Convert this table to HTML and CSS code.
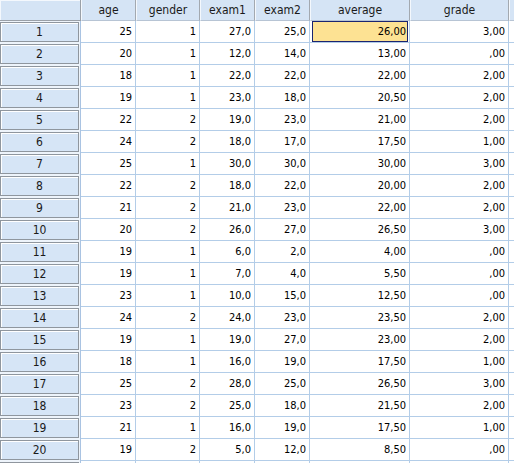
FILE: index.html
```html
<!DOCTYPE html>
<html>
<head>
<meta charset="utf-8">
<link rel="stylesheet" href="styles.css">
</head>
<body>
<div class="sheet">
  <div class="row head">
    <div class="rh corner"></div>
    <div class="ch">age</div>
    <div class="ch">gender</div>
    <div class="ch">exam1</div>
    <div class="ch">exam2</div>
    <div class="ch">average</div>
    <div class="ch">grade</div>
    <div class="ch rest"></div>
  </div>
  <div class="row"><div class="rh"><span class="btn">1</span></div><div class="c">25</div><div class="c">1</div><div class="c">27,0</div><div class="c">25,0</div><div class="c sel"><span class="selbox">26,00</span></div><div class="c">3,00</div><div class="c rest"></div></div>
  <div class="row"><div class="rh"><span class="btn">2</span></div><div class="c">20</div><div class="c">1</div><div class="c">12,0</div><div class="c">14,0</div><div class="c">13,00</div><div class="c">,00</div><div class="c rest"></div></div>
  <div class="row"><div class="rh"><span class="btn">3</span></div><div class="c">18</div><div class="c">1</div><div class="c">22,0</div><div class="c">22,0</div><div class="c">22,00</div><div class="c">2,00</div><div class="c rest"></div></div>
  <div class="row"><div class="rh"><span class="btn">4</span></div><div class="c">19</div><div class="c">1</div><div class="c">23,0</div><div class="c">18,0</div><div class="c">20,50</div><div class="c">2,00</div><div class="c rest"></div></div>
  <div class="row"><div class="rh"><span class="btn">5</span></div><div class="c">22</div><div class="c">2</div><div class="c">19,0</div><div class="c">23,0</div><div class="c">21,00</div><div class="c">2,00</div><div class="c rest"></div></div>
  <div class="row"><div class="rh"><span class="btn">6</span></div><div class="c">24</div><div class="c">2</div><div class="c">18,0</div><div class="c">17,0</div><div class="c">17,50</div><div class="c">1,00</div><div class="c rest"></div></div>
  <div class="row"><div class="rh"><span class="btn">7</span></div><div class="c">25</div><div class="c">1</div><div class="c">30,0</div><div class="c">30,0</div><div class="c">30,00</div><div class="c">3,00</div><div class="c rest"></div></div>
  <div class="row"><div class="rh"><span class="btn">8</span></div><div class="c">22</div><div class="c">2</div><div class="c">18,0</div><div class="c">22,0</div><div class="c">20,00</div><div class="c">2,00</div><div class="c rest"></div></div>
  <div class="row"><div class="rh"><span class="btn">9</span></div><div class="c">21</div><div class="c">2</div><div class="c">21,0</div><div class="c">23,0</div><div class="c">22,00</div><div class="c">2,00</div><div class="c rest"></div></div>
  <div class="row"><div class="rh"><span class="btn">10</span></div><div class="c">20</div><div class="c">2</div><div class="c">26,0</div><div class="c">27,0</div><div class="c">26,50</div><div class="c">3,00</div><div class="c rest"></div></div>
  <div class="row"><div class="rh"><span class="btn">11</span></div><div class="c">19</div><div class="c">1</div><div class="c">6,0</div><div class="c">2,0</div><div class="c">4,00</div><div class="c">,00</div><div class="c rest"></div></div>
  <div class="row"><div class="rh"><span class="btn">12</span></div><div class="c">19</div><div class="c">1</div><div class="c">7,0</div><div class="c">4,0</div><div class="c">5,50</div><div class="c">,00</div><div class="c rest"></div></div>
  <div class="row"><div class="rh"><span class="btn">13</span></div><div class="c">23</div><div class="c">1</div><div class="c">10,0</div><div class="c">15,0</div><div class="c">12,50</div><div class="c">,00</div><div class="c rest"></div></div>
  <div class="row"><div class="rh"><span class="btn">14</span></div><div class="c">24</div><div class="c">2</div><div class="c">24,0</div><div class="c">23,0</div><div class="c">23,50</div><div class="c">2,00</div><div class="c rest"></div></div>
  <div class="row"><div class="rh"><span class="btn">15</span></div><div class="c">19</div><div class="c">1</div><div class="c">19,0</div><div class="c">27,0</div><div class="c">23,00</div><div class="c">2,00</div><div class="c rest"></div></div>
  <div class="row"><div class="rh"><span class="btn">16</span></div><div class="c">18</div><div class="c">1</div><div class="c">16,0</div><div class="c">19,0</div><div class="c">17,50</div><div class="c">1,00</div><div class="c rest"></div></div>
  <div class="row"><div class="rh"><span class="btn">17</span></div><div class="c">25</div><div class="c">2</div><div class="c">28,0</div><div class="c">25,0</div><div class="c">26,50</div><div class="c">3,00</div><div class="c rest"></div></div>
  <div class="row"><div class="rh"><span class="btn">18</span></div><div class="c">23</div><div class="c">2</div><div class="c">25,0</div><div class="c">18,0</div><div class="c">21,50</div><div class="c">2,00</div><div class="c rest"></div></div>
  <div class="row"><div class="rh"><span class="btn">19</span></div><div class="c">21</div><div class="c">1</div><div class="c">16,0</div><div class="c">19,0</div><div class="c">17,50</div><div class="c">1,00</div><div class="c rest"></div></div>
  <div class="row"><div class="rh"><span class="btn">20</span></div><div class="c">19</div><div class="c">2</div><div class="c">5,0</div><div class="c">12,0</div><div class="c">8,50</div><div class="c">,00</div><div class="c rest"></div></div>
  <div class="row"><div class="rh"><span class="btn"></span></div><div class="c"></div><div class="c"></div><div class="c"></div><div class="c"></div><div class="c"></div><div class="c"></div><div class="c rest"></div></div>
</div>
</body>
</html>
```
FILE: styles.css
```css
html, body {
  margin: 0;
  padding: 0;
  background: #ffffff;
  overflow: hidden;
}
body {
  width: 514px;
  height: 463px;
  font-family: "DejaVu Sans Condensed", "Liberation Sans", Arial, sans-serif;
  font-size: 11px;
  color: #000000;
}
.sheet {
  display: flex;
  flex-direction: column;
}
.row {
  display: grid;
  grid-template-columns: 81px 55px 64px 55px 55px 100px 99px 1fr;
  height: 22px;
}
.row.head {
  height: 21px;
}
.ch {
  background: #d5e4f5;
  border-right: 1px solid #a3a9b0;
  border-left: 1px solid #f4f8fd;
  border-bottom: 1px solid #b7c4d4;
  box-sizing: border-box;
  text-align: center;
  line-height: 20px;
  font-size: 12px;
  color: #1a1a1a;
}
.rh.corner {
  background: #d5e4f5;
  border-right: 1px solid #9aa0a8;
  border-bottom: 1px solid #9aa0a8;
  box-shadow: inset 1px 1px 0 #f4f8fd;
  box-sizing: border-box;
}
.rh {
  background: #eef4fb;
  border-right: 1px solid #a9c3e2;
  box-sizing: border-box;
  padding: 1px 1px 1px 0;
  display: flex;
}
.btn {
  flex: 1;
  background: #d6e5f6;
  border: 1px solid #8f969e;
  box-shadow: inset 1px 1px 0 #ffffff;
  text-align: center;
  line-height: 18px;
  font-size: 12px;
  color: #1a1a1a;
}
.c {
  border-right: 1px solid #b3cde8;
  border-bottom: 1px solid #b3cde8;
  box-sizing: border-box;
  text-align: right;
  padding-right: 3px;
  line-height: 21px;
  white-space: nowrap;
  overflow: hidden;
}
.c.sel {
  padding: 0 1px 0 2px;
  display: flex;
}
.selbox {
  flex: 1;
  background: #fde293;
  border: 1px solid #1a2470;
  line-height: 19px;
  padding-right: 1px;
  text-align: right;
}
.rest {
  border-right: none;
}
```
